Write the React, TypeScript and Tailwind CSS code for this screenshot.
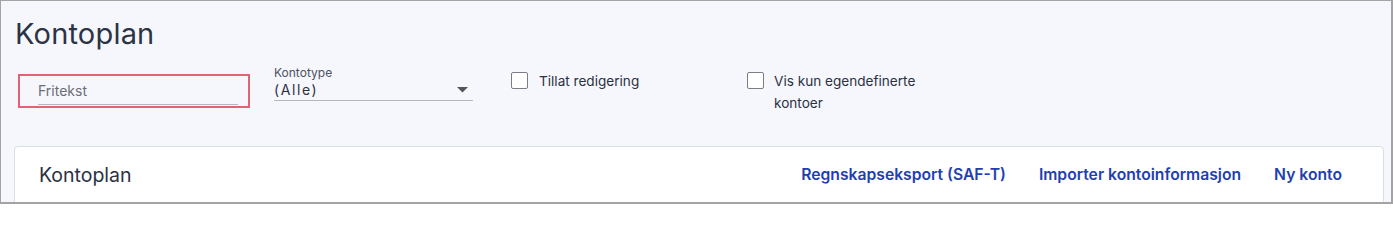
import React from "react";

export default function App() {
  return (
    <div
      className="w-[1393px] h-[204px] overflow-hidden bg-[#f5f7fc] border-t border-l border-r-2 border-b-2 border-[#a3a3a3] text-[#2b3141]"
      style={{ fontFamily: "Inter, 'Noto Sans', sans-serif" }}
    >
      <div className="pl-[13px] pr-[7px]">
        <h1 className="pt-[15px] pl-[1px] text-[29px] leading-[36px] font-normal text-[#2b3344] tracking-[0.2px]">
          Kontoplan
        </h1>
        <div className="flex items-start mt-[20px] h-[74px]">
          <div className="mt-[2px] ml-[4px] w-[232px] h-[34px] border-2 border-[#df6474] flex flex-col pl-[18px] pr-[10px]">
            <div className="mt-[6px] text-[14px] leading-[18px] text-[#6b6e76]">Fritekst</div>
            <div className="mt-[4px] h-px bg-[#b5b7bd]" />
          </div>
          <div className="ml-[24px] w-[199px] flex flex-col">
            <div className="mt-[-6px] text-[12px] leading-[14px] text-[#4d5160]">Kontotype</div>
            <div className="flex items-center justify-between h-[20px] pr-[5px]">
              <span className="text-[14px] leading-[18px] text-[#2b3141] tracking-[1.6px]">(Alle)</span>
              <svg width="11" height="6" viewBox="0 0 11 6">
                <path d="M0 0 H11 L5.5 5.5 Z" fill="#555" />
              </svg>
            </div>
            <div className="mt-[0px] h-px bg-[#b5b7bd]" />
          </div>
          <div className="ml-[38px] flex items-start gap-[11px] w-[236px]">
            <div className="mt-[0px] w-[17px] h-[17px] border border-[#7a7d85] rounded-[2px] bg-white shrink-0" />
            <span className="mt-[-2px] text-[13.6px] leading-[22px] text-[#2b3141]">Tillat redigering</span>
          </div>
          <div className="flex items-start gap-[10px] w-[180px]">
            <div className="mt-[0px] w-[17px] h-[17px] border border-[#7a7d85] rounded-[2px] bg-white shrink-0" />
            <span className="mt-[-2px] text-[13.6px] leading-[22px] text-[#2b3141]">
              Vis kun egendefinerte kontoer
            </span>
          </div>
        </div>
        <div className="bg-white border border-[#dcdee5] rounded-[4px] h-[80px] flex items-start justify-between pl-[24px] pr-[41px]">
          <div className="pt-[15px] text-[19.5px] leading-[26px] text-[#2b3141]">Kontoplan</div>
          <div className="flex gap-[33px] pt-[17px] text-[15.7px] leading-[22px] font-semibold text-[#1f3fae]">
            <span>Regnskapseksport (SAF-T)</span>
            <span>Importer kontoinformasjon</span>
            <span>Ny konto</span>
          </div>
        </div>
      </div>
    </div>
  );
}
